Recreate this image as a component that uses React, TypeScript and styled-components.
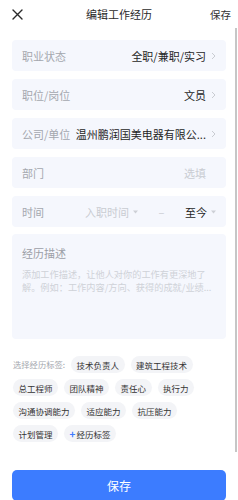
import React from "react";
import styled, { createGlobalStyle } from "styled-components";

const GlobalStyle = createGlobalStyle`
  body {
    margin: 0;
    background: #ffffff;
    font-family: "Noto Sans CJK SC", "Noto Sans", sans-serif;
  }
`;

const Page = styled.div`
  position: relative;
  width: 238px;
  height: 500px;
  overflow: hidden;
  background: #fff;
`;

const Header = styled.div`
  height: 28px;
  display: flex;
  align-items: center;
  justify-content: space-between;
  padding: 0 7px 0 12px;
  position: relative;
`;

const Title = styled.div`
  position: absolute;
  left: 0;
  right: 0;
  text-align: center;
  font-size: 11px;
  color: #2a2a2a;
  pointer-events: none;
`;

const HeaderAction = styled.span`
  font-size: 10.5px;
  color: #333;
`;

const ScrollThumb = styled.div`
  position: absolute;
  right: 1px;
  top: 28px;
  width: 2px;
  height: 424px;
  background: #c6c6c6;
`;

const Content = styled.div`
  padding: 12px 12px 0;
  display: flex;
  flex-direction: column;
`;

const Fields = styled.div`
  display: flex;
  flex-direction: column;
  gap: 8px;
`;

const Field = styled.div`
  height: 31px;
  box-sizing: border-box;
  padding: 0 10px;
  background: #f5f7fd;
  border-radius: 4px;
  display: flex;
  align-items: center;
  font-size: 11px;
`;

const Label = styled.span<{ $width?: number }>`
  color: #a4a7ae;
  white-space: nowrap;
  flex-shrink: 0;
  width: ${(p) => (p.$width ? `${p.$width}px` : "auto")};
`;

const Value = styled.span<{ $muted?: boolean }>`
  flex: 1;
  min-width: 0;
  text-align: right;
  white-space: nowrap;
  color: ${(p) => (p.$muted ? "#c9ccd2" : "#262626")};
  margin-left: 4px;
`;

const ChevronBox = styled.span`
  width: 10px;
  display: flex;
  justify-content: flex-end;
  flex-shrink: 0;
`;

const TimeGroup = styled.div`
  flex: 1;
  display: flex;
  align-items: center;
  justify-content: space-between;
`;

const TimePick = styled.span<{ $muted?: boolean }>`
  display: flex;
  align-items: center;
  gap: 4px;
  color: ${(p) => (p.$muted ? "#c9ccd2" : "#262626")};
`;

const Dash = styled.span`
  color: #c9ccd2;
`;

const DescBox = styled.div`
  margin-top: 7px;
  height: 105px;
  box-sizing: border-box;
  background: #f5f7fd;
  border-radius: 4px;
  padding: 11px 10px;
`;

const DescLabel = styled.div`
  font-size: 11px;
  color: #9c9fa7;
  line-height: 16px;
`;

const DescHint = styled.div`
  margin-top: 7px;
  font-size: 9.2px;
  line-height: 13px;
  color: #cfd2d8;
`;

const Tags = styled.div`
  margin-top: 17px;
  display: flex;
  flex-wrap: wrap;
  align-items: center;
  gap: 6px 6px;
  padding-left: 1px;
`;

const TagsLabel = styled.span`
  font-size: 8.3px;
  color: #a4a7ae;
  line-height: 17px;
`;

const Tag = styled.span`
  height: 17px;
  padding: 0 5.5px;
  border-radius: 9px;
  background: #f3f4f7;
  color: #333;
  font-size: 8.5px;
  display: inline-flex;
  align-items: center;
  gap: 1px;
`;

const Plus = styled.span`
  color: #3d7bff;
  font-size: 10px;
  font-weight: 700;
  line-height: 1;
`;

const SaveButton = styled.button`
  margin-top: 28px;
  height: 31px;
  border: none;
  border-radius: 5px;
  background: #3c7cff;
  color: #fff;
  font-family: inherit;
  font-size: 12px;
  width: 100%;
`;

const Chevron = () => (
  <svg width="5" height="8" viewBox="0 0 5 8">
    <polyline points="1,1 4,4 1,7" fill="none" stroke="#c9ccd2" strokeWidth="1" />
  </svg>
);

const Caret = () => (
  <svg width="5" height="4" viewBox="0 0 5 4">
    <polygon points="0,0.5 5,0.5 2.5,3.5" fill="#cdd0d6" />
  </svg>
);

const CloseIcon = () => (
  <svg width="11" height="11" viewBox="0 0 11 11">
    <path d="M1 1 L10 10 M10 1 L1 10" stroke="#2a2a2a" strokeWidth="1.4" strokeLinecap="round" />
  </svg>
);

const tags = ["技术负责人", "建筑工程技术", "总工程师", "团队精神", "责任心", "执行力", "沟通协调能力", "适应能力", "抗压能力", "计划管理"];

export default function App() {
  return (
    <Page>
      <GlobalStyle />
      <Header>
        <CloseIcon />
        <Title>编辑工作经历</Title>
        <HeaderAction>保存</HeaderAction>
      </Header>
      <ScrollThumb />
      <Content>
        <Fields>
          <Field>
            <Label>职业状态</Label>
            <Value>全职/兼职/实习</Value>
            <ChevronBox><Chevron /></ChevronBox>
          </Field>
          <Field>
            <Label>职位/岗位</Label>
            <Value>文员</Value>
            <ChevronBox><Chevron /></ChevronBox>
          </Field>
          <Field>
            <Label>公司/单位</Label>
            <Value>温州鹏润国美电器有限公...</Value>
            <ChevronBox><Chevron /></ChevronBox>
          </Field>
          <Field>
            <Label>部门</Label>
            <Value $muted>选填</Value>
            <ChevronBox />
          </Field>
          <Field>
            <Label $width={63}>时间</Label>
            <TimeGroup>
              <TimePick $muted>入职时间<Caret /></TimePick>
              <Dash>–</Dash>
              <TimePick>至今<Caret /></TimePick>
            </TimeGroup>
          </Field>
        </Fields>
        <DescBox>
          <DescLabel>经历描述</DescLabel>
          <DescHint>添加工作描述，让他人对你的工作有更深地了解。例如：工作内容/方向、获得的成就/业绩...</DescHint>
        </DescBox>
        <Tags>
          <TagsLabel>选择经历标签:</TagsLabel>
          {tags.map((t) => (
            <Tag key={t}>{t}</Tag>
          ))}
          <Tag><Plus>+</Plus>经历标签</Tag>
        </Tags>
        <SaveButton>保存</SaveButton>
      </Content>
    </Page>
  );
}
